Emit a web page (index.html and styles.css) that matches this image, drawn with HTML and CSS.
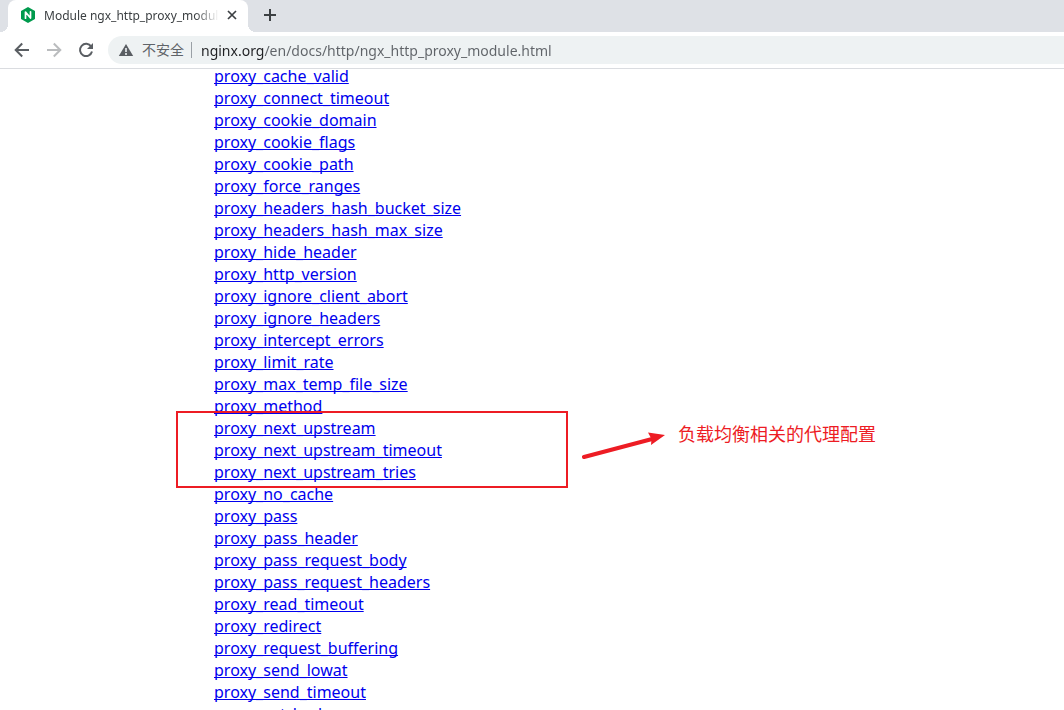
FILE: index.html
```html
<!DOCTYPE html>
<html lang="en">
<head>
  <meta charset="UTF-8">
  <title>Module ngx_http_proxy_module</title>
  <link rel="stylesheet" href="styles.css">
</head>
<body>
<div class="tabs">
  <div class="tab">
    <svg class="favicon" width="16" height="16" viewBox="0 0 16 16">
      <path d="M8 0l7 4v8l-7 4-7-4V4z" fill="#009a4d"/>
      <path d="M5.5 11.2V5l5 6V4.8" fill="none" stroke="#fff" stroke-width="1.7" stroke-linecap="round" stroke-linejoin="round"/>
    </svg>
    <span class="tab_title">Module ngx_http_proxy_module</span>
    <button class="tab_close" aria-label="Close tab">
      <svg width="10" height="10" viewBox="0 0 10 10"><path d="M1 1l8 8M9 1l-8 8" stroke="#3c4043" stroke-width="1.7"/></svg>
    </button>
  </div>
  <button class="tab_new" aria-label="New tab">
    <svg width="12" height="12" viewBox="0 0 12 12"><path d="M6 0v12M0 6h12" stroke="#3c4043" stroke-width="2"/></svg>
  </button>
</div>
<div class="toolbar">
  <button aria-label="Back">
    <svg width="16" height="16" viewBox="0 0 16 16"><path d="M15 8H2M8.2 1.5L1.7 8l6.5 6.5" fill="none" stroke="#5a5e63" stroke-width="2"/></svg>
  </button>
  <button aria-label="Forward">
    <svg width="16" height="16" viewBox="0 0 16 16"><path d="M1 8h13M7.8 1.5L14.3 8l-6.5 6.5" fill="none" stroke="#babcbe" stroke-width="2"/></svg>
  </button>
  <button aria-label="Reload">
    <svg width="16" height="16" viewBox="0 0 16 16"><path d="M13.2 4.6A6.1 6.1 0 1 0 14 9.5" fill="none" stroke="#5a5e63" stroke-width="2"/><path d="M15 1v6H9z" fill="#5a5e63"/></svg>
  </button>
  <div class="address">
    <svg width="16" height="14" viewBox="0 0 16 14"><path d="M8 1l7.2 12H.8z" fill="#5a5e63"/><path d="M8 5v4M8 10v2" stroke="#eef2f3" stroke-width="1.6"/></svg>
    <label class="unsafe" for="url">不安全</label>
    <input type="text" id="url" class="url" value="nginx.org/en/docs/http/ngx_http_proxy_module.html">
  </div>
</div>
<main class="page">
  <div class="links">
    <a href="#proxy_cache_valid">proxy_cache_valid</a>
    <a href="#proxy_connect_timeout">proxy_connect_timeout</a>
    <a href="#proxy_cookie_domain">proxy_cookie_domain</a>
    <a href="#proxy_cookie_flags">proxy_cookie_flags</a>
    <a href="#proxy_cookie_path">proxy_cookie_path</a>
    <a href="#proxy_force_ranges">proxy_force_ranges</a>
    <a href="#proxy_headers_hash_bucket_size">proxy_headers_hash_bucket_size</a>
    <a href="#proxy_headers_hash_max_size">proxy_headers_hash_max_size</a>
    <a href="#proxy_hide_header">proxy_hide_header</a>
    <a href="#proxy_http_version">proxy_http_version</a>
    <a href="#proxy_ignore_client_abort">proxy_ignore_client_abort</a>
    <a href="#proxy_ignore_headers">proxy_ignore_headers</a>
    <a href="#proxy_intercept_errors">proxy_intercept_errors</a>
    <a href="#proxy_limit_rate">proxy_limit_rate</a>
    <a href="#proxy_max_temp_file_size">proxy_max_temp_file_size</a>
    <a href="#proxy_method">proxy_method</a>
    <a href="#proxy_next_upstream">proxy_next_upstream</a>
    <a href="#proxy_next_upstream_timeout">proxy_next_upstream_timeout</a>
    <a href="#proxy_next_upstream_tries">proxy_next_upstream_tries</a>
    <a href="#proxy_no_cache">proxy_no_cache</a>
    <a href="#proxy_pass">proxy_pass</a>
    <a href="#proxy_pass_header">proxy_pass_header</a>
    <a href="#proxy_pass_request_body">proxy_pass_request_body</a>
    <a href="#proxy_pass_request_headers">proxy_pass_request_headers</a>
    <a href="#proxy_read_timeout">proxy_read_timeout</a>
    <a href="#proxy_redirect">proxy_redirect</a>
    <a href="#proxy_request_buffering">proxy_request_buffering</a>
    <a href="#proxy_send_lowat">proxy_send_lowat</a>
    <a href="#proxy_send_timeout">proxy_send_timeout</a>
    <a href="#proxy_set_body">proxy_set_body</a>
  </div>
  <!-- red marks over the page -->
  <div class="note">
    <div class="note_box"></div>
    <svg class="note_arrow" width="84" height="32" viewBox="0 0 84 32">
      <path d="M2 26L72 7.500" stroke="#ed1c24" stroke-width="4" stroke-linecap="round"/>
      <path d="M83 4L66 1.500l3.500 6.500L69 14z" fill="#ed1c24"/>
    </svg>
    <span class="note_text">负载均衡相关的代理配置</span>
  </div>
</main>
</body>
</html>
```
FILE: styles.css
```css
body {
  margin: 0;
  height: 100vh;
  display: flex;
  flex-direction: column;
  overflow: hidden;
  background: #fff;
  font-family: "Noto Sans", "Noto Sans CJK SC", sans-serif;
}
button {
  display: flex;
  padding: 0;
  border: 0;
  background: none;
}
.tabs {
  display: flex;
  align-items: center;
  height: 32px;
  padding-left: 8px;
  background: #dee1e6;
}
.tab {
  position: relative;
  display: flex;
  align-items: center;
  box-sizing: border-box;
  width: 240px;
  height: 32px;
  padding: 0 11px 2px 12px;
  border-radius: 8px 8px 0 0;
  background: #fff;
}
/* curved feet of the active tab */
.tab::before,
.tab::after {
  content: "";
  position: absolute;
  bottom: 0;
  width: 8px;
  height: 8px;
}
.tab::before {
  left: -8px;
  background: radial-gradient(circle at 0 0, #dee1e6 8px, #fff 8px);
}
.tab::after {
  right: -8px;
  background: radial-gradient(circle at 100% 0, #dee1e6 8px, #fff 8px);
}
.tab_title {
  flex: 1;
  margin: 0 8px;
  overflow: hidden;
  white-space: nowrap;
  font-size: 12px;
  color: #3c4043;
  -webkit-mask-image: linear-gradient(to left, transparent, #000 24px);
  mask-image: linear-gradient(to left, transparent, #000 24px);
}
.tab_new {
  margin: 0 0 2px 16px;
}
.toolbar {
  display: flex;
  align-items: center;
  gap: 16px;
  height: 36px;
  padding-left: 14px;
  border-bottom: 1px solid #dadce0;
}
.address {
  flex: 1;
  display: flex;
  align-items: center;
  height: 28px;
  margin-left: -2px;
  padding-left: 10px;
  border-radius: 14px 0 0 14px;
  background: #eef2f3;
}
.unsafe {
  margin-left: 8px;
  padding-right: 7px;
  border-right: 1px solid #9aa0a6;
  font-size: 14px;
  line-height: 16px;
  color: #5f6368;
}
/* the host is darker than the path */
.url {
  flex: 1;
  margin-left: 9px;
  padding: 0;
  border: 0;
  outline: 0;
  font: 14px "Noto Sans", sans-serif;
  color: transparent;
  background: linear-gradient(to right, #202124 63px, #5f6368 63px);
  -webkit-background-clip: text;
  background-clip: text;
}
.page {
  position: relative;
  flex: 1;
  min-height: 0;
  overflow: hidden;
}
.links {
  display: flex;
  flex-direction: column;
  align-items: flex-start;
  margin-top: -4px;
  padding-left: 214px;
  font-size: 16px;
  line-height: 22px;
}
.links a {
  color: #0000ee;
  text-decoration-thickness: 1px;
  text-underline-offset: 1px;
  text-decoration-skip-ink: none;
}
.note {
  position: absolute;
  top: 342px;
  left: 176px;
  display: flex;
  align-items: flex-start;
  color: #ed1c24;
}
.note_box {
  box-sizing: border-box;
  width: 392px;
  height: 77px;
  border: 2px solid #ed1c24;
}
.note_arrow {
  margin: 20px 12px 0 14px;
}
.note_text {
  margin-top: 10px;
  font-size: 18px;
  line-height: 26px;
}
```
